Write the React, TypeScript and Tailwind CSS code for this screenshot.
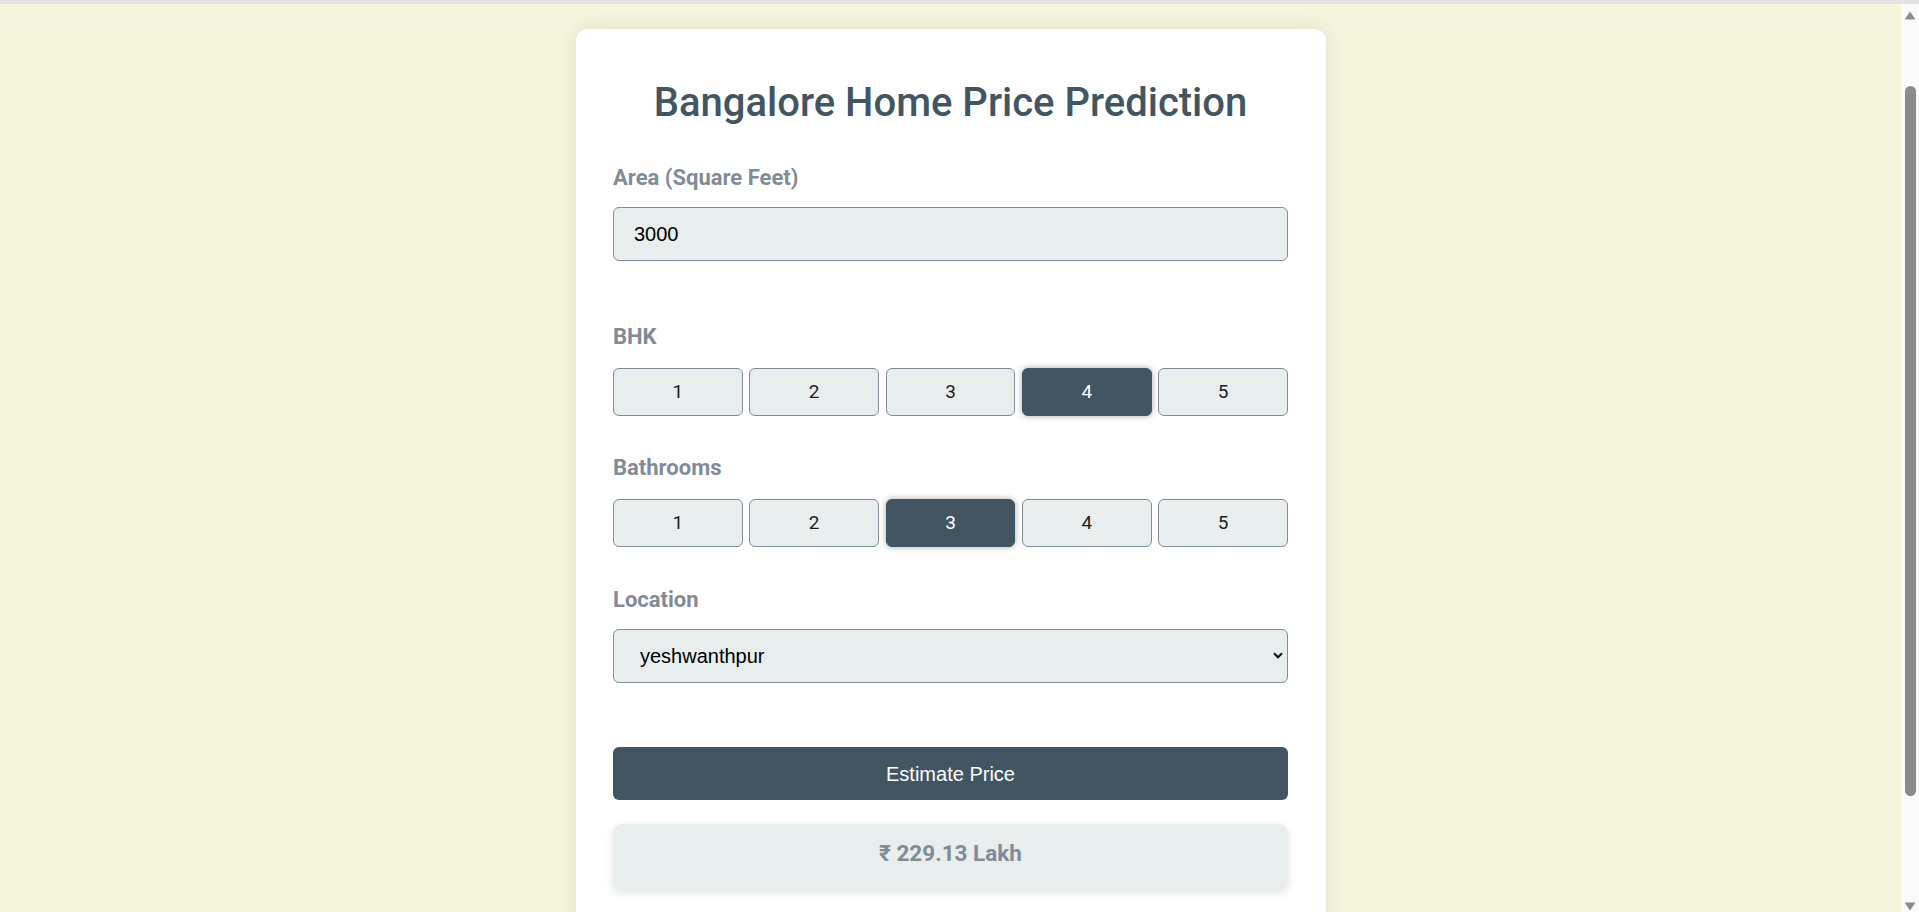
import { useState } from "react";

const options = [1, 2, 3, 4, 5];

function Choice({
  value,
  onChange,
}: {
  value: number;
  onChange: (n: number) => void;
}) {
  return (
    <div className="flex gap-[6.5px] mt-[20px]">
      {options.map((n) => (
        <button
          key={n}
          onClick={() => onChange(n)}
          className={
            n === value
              ? "flex-1 h-[48px] rounded-[6px] border border-[#425563] bg-[#425563] text-white text-[19px] shadow-[0_0_6px_rgba(0,0,0,0.35)]"
              : "flex-1 h-[48px] rounded-[6px] border border-[#7f8c96] bg-[#e8eded] text-[#1e1e1e] text-[19px]"
          }
        >
          {n}
        </button>
      ))}
    </div>
  );
}

// fake page scrollbar strip, as in the screenshot
function Scrollbar() {
  return (
    <div className="sticky top-0 w-[18px] h-[908px] shrink-0 bg-[#fafafa] flex flex-col items-center">
      <svg className="mt-[7px] w-[12px] h-[9px]" viewBox="0 0 12 9">
        <path d="M6 0.5 L11.5 8.5 L0.5 8.5 Z" fill="#8b8b8b" />
      </svg>
      <div className="mt-[66px] w-[11px] h-[710px] rounded-full bg-[#8b8b8b]" />
      <div className="flex-1" />
      <svg className="mb-[1px] w-[12px] h-[9px]" viewBox="0 0 12 9">
        <path d="M0.5 0.5 L11.5 0.5 L6 8.5 Z" fill="#8b8b8b" />
      </svg>
    </div>
  );
}

export default function App() {
  const [bhk, setBhk] = useState(4);
  const [bath, setBath] = useState(3);

  return (
    <div className="min-h-screen bg-[#f5f5dc] border-t-4 border-[#e3e3e3] flex items-start font-['Roboto',sans-serif]">
      <main className="flex-1 pt-[25px] pb-[40px]">
        <div className="mx-auto w-[750px] bg-white rounded-[12px] shadow-[0_0_22px_rgba(0,0,0,0.09)] px-[37.5px] pt-[50px] pb-[70px]">
          <h1 className="text-center text-[40px] leading-[47px] font-medium text-[#425563]">
            Bangalore Home Price Prediction
          </h1>

          <label className="block mt-[40px] text-[22px] leading-[23px] font-bold text-[#7f8c97]">
            Area (Square Feet)
          </label>
          <input
            defaultValue="3000"
            className="block w-full mt-[18px] h-[54px] rounded-[6px] border border-[#7f8c96] bg-[#e8eded] pl-[20px] text-[20px] text-black font-['Liberation_Sans',Arial,sans-serif] outline-none"
          />

          <label className="block mt-[64px] text-[22px] leading-[23px] font-bold text-[#7f8c97]">
            BHK
          </label>
          <Choice value={bhk} onChange={setBhk} />

          <label className="block mt-[40px] text-[22px] leading-[23px] font-bold text-[#7f8c97]">
            Bathrooms
          </label>
          <Choice value={bath} onChange={setBath} />

          <label className="block mt-[41px] text-[22px] leading-[23px] font-bold text-[#7f8c97]">
            Location
          </label>
          <div className="relative mt-[18px]">
            <select
              defaultValue="yeshwanthpur"
              className="block w-full h-[54px] appearance-none rounded-[6px] border border-[#7f8c96] bg-[#e8eded] pl-[26px] text-[20px] text-black font-['Liberation_Sans',Arial,sans-serif] outline-none"
            >
              <option>electronic city</option>
              <option>whitefield</option>
              <option>yeshwanthpur</option>
            </select>
            <svg
              className="absolute right-[5px] top-[23px] w-[10px] h-[7px] pointer-events-none"
              viewBox="0 0 10 7"
            >
              <path d="M1 1.2 L5 5.2 L9 1.2" fill="none" stroke="#111" strokeWidth="2.1" />
            </svg>
          </div>

          <button className="block w-full mt-[64px] h-[53px] rounded-[6px] bg-[#425563] text-white text-[20px] font-['Liberation_Sans',Arial,sans-serif]">
            Estimate Price
          </button>

          <div className="mt-[24px] h-[67px] pb-[7px] rounded-[10px] bg-[#e8eded] shadow-[0_2px_8px_rgba(0,0,0,0.12)] flex items-center justify-center text-[22.5px] font-bold text-[#7f8c97]">
            ₹ 229.13 Lakh
          </div>
        </div>
      </main>
      <Scrollbar />
    </div>
  );
}
